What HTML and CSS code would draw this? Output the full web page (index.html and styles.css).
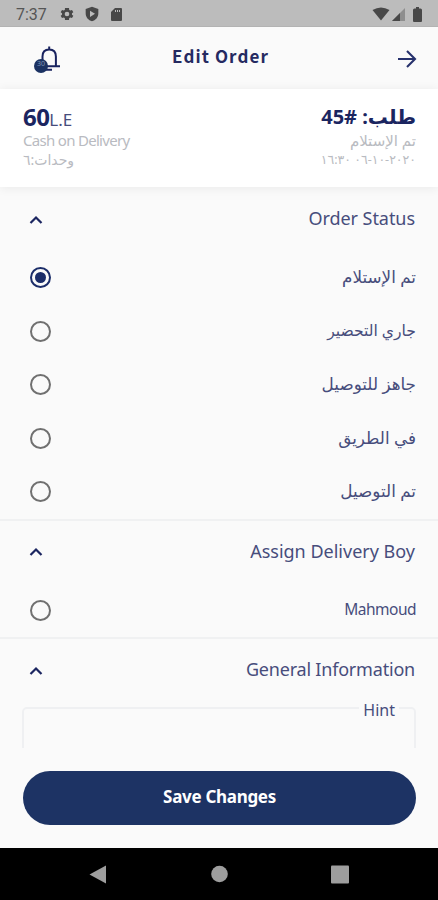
FILE: index.html
```html
<!DOCTYPE html>
<html lang="en">
<head>
    <meta charset="UTF-8">
    <title>Edit Order</title>
    <link rel="stylesheet" href="styles.css">
</head>
<body>
    <div class="statusbar">
        <span class="time">7:37</span>
        <svg class="gear" width="16" height="16" viewBox="0 0 24 24"><path fill-rule="evenodd" d="M19.4 13c.1-.7.1-1.300 0-2l2.100-1.600-2-3.500-2.500 1a7 7 0 0 0-1.700-1L15 3H9l-.3 2.900a7 7 0 0 0-1.700 1l-2.500-1-2 3.500L4.600 11a8 8 0 0 0 0 2l-2.100 1.600 2 3.500 2.500-1a7 7 0 0 0 1.700 1L9 21h6l.3-2.900a7 7 0 0 0 1.700-1l2.500 1 2-3.500zM12 15.500a3.500 3.500 0 1 1 0-7 3.500 3.500 0 0 1 0 7z"/></svg>
        <svg class="shield" width="16" height="16" viewBox="0 0 24 24"><path fill-rule="evenodd" d="M12 1 2.500 4.500V11c0 6 4 10.500 9.500 12 5.500-1.500 9.500-6 9.500-12V4.500zM9 7l7.500 4.700L9 16.500z"/></svg>
        <svg class="sd" width="13" height="14" viewBox="0 0 13 14"><path fill-rule="evenodd" d="M5 1h6a1 1 0 0 1 1 1v11a1 1 0 0 1-1 1H2a1 1 0 0 1-1-1V5zM5 3v2h1V3zm2 0v2h1V3zm2 0v2h1V3z"/></svg>
        <div class="signals">
            <svg width="18" height="14" viewBox="0 0 18 14"><path d="M9 13.500.500 3Q9-2 17.500 3z"/></svg>
            <svg width="13" height="13" viewBox="0 0 13 13"><path d="M13 0v13H0z" fill="#8e8e8e"/><path d="M8 5v8H0z"/></svg>
            <svg class="battery" width="9" height="15" viewBox="0 0 9 15"><path d="M3 0h3v1.500h1.500q1.500 0 1.500 1.500V14q0 1-1 1H1q-1 0-1-1V3q0-1.500 1.500-1.500H3z"/></svg>
        </div>
    </div>

    <div class="header">
        <svg class="bell" width="28" height="30" viewBox="0 0 28 30">
            <path d="M9.500 21V11.500q0-7 6.700-7t6.700 7V21M7 21.200h20M16.200 4.500V1.500M13 24.800h6" fill="none" stroke="#19235f" stroke-width="2"/>
            <circle cx="8" cy="21" r="7" fill="#1b3262"/>
            <text x="8" y="21" class="count">30</text>
        </svg>
        <h1>Edit Order</h1>
        <svg class="back" width="20" height="20" viewBox="0 0 20 20"><path d="M1 10h17M10 2l8 8-8 8" fill="none" stroke="#26316c" stroke-width="2.100"/></svg>
    </div>

    <div class="summary">
        <div class="payment">
            <p class="price"><b>60</b>L.E</p>
            <p class="method">Cash on Delivery</p>
            <p class="units"><bdo dir="ltr">٦:</bdo><span>وحدات</span></p>
        </div>
        <div class="order">
            <p class="number" dir="rtl">طلب: <bdo dir="ltr">45#</bdo></p>
            <p class="state" dir="rtl">تم الإستلام</p>
            <p class="date"><bdo dir="ltr">١٦:٣٠ ٠٦-١٠-٢٠٢٠</bdo></p>
        </div>
    </div>

    <div class="content">
        <div class="section">
            <div class="title">
                <svg width="14" height="10" viewBox="0 0 14 10"><path d="M1.500 8 7 2.500 12.500 8"/></svg>
                <h2 class="t-status">Order Status</h2>
            </div>
            <div class="option"><span class="radio checked"></span><span class="wide" dir="rtl">تم الإستلام</span></div>
            <div class="option"><span class="radio"></span><span class="narrow" dir="rtl">جاري التحضير</span></div>
            <div class="option"><span class="radio"></span><span class="wide" dir="rtl">جاهز للتوصيل</span></div>
            <div class="option"><span class="radio"></span><span class="wide" dir="rtl">في الطريق</span></div>
            <div class="option"><span class="radio"></span><span class="wide" dir="rtl">تم التوصيل</span></div>
        </div>
        <div class="section">
            <div class="title">
                <svg width="14" height="10" viewBox="0 0 14 10"><path d="M1.500 8 7 2.500 12.500 8"/></svg>
                <h2 class="t-assign">Assign Delivery Boy</h2>
            </div>
            <div class="option"><span class="radio"></span><span class="name">Mahmoud</span></div>
        </div>
        <div class="section">
            <div class="title">
                <svg width="14" height="10" viewBox="0 0 14 10"><path d="M1.500 8 7 2.500 12.500 8"/></svg>
                <h2 class="t-general">General Information</h2>
            </div>
            <div class="field"><label>Hint</label></div>
        </div>
    </div>

    <div class="footer">
        <button class="save">Save Changes</button>
    </div>

    <div class="navbar">
        <svg width="438" height="52" viewBox="0 0 438 52"><path d="M106 17.500v18L89.500 26.500z"/><circle cx="219.500" cy="26" r="8.300"/><rect x="331" y="17.500" width="18" height="18" rx="1"/></svg>
    </div>
</body>
</html>
```
FILE: styles.css
```css
*{
    margin: 0;
    padding: 0;
    box-sizing: border-box;
}

body{
    width: 438px;
    height: 900px;
    display: flex;
    flex-direction: column;
    overflow: hidden;
    background-color: #fafafa;
    color: #474d7c;
    font-family: "Noto Sans", "DejaVu Sans", sans-serif;
}

svg{
    display: block;
    flex: none;
}

p, h1, h2, .option span, button{
    white-space: nowrap;
}

/*status bar*/
.statusbar{
    height: 27px;
    flex: none;
    display: flex;
    align-items: center;
    padding: 2px 16px 0 16px;
    background-color: #bcbcbc;
    fill: #484848;
    border-bottom: 1px solid #b3b3b3;
}

.time{
    width: 43px;
    font: 16px Roboto, sans-serif;
    color: #555;
}

.shield{
    margin-left: 9px;
}

.sd{
    margin-left: 10px;
}

.signals{
    display: flex;
    align-items: center;
    margin-left: auto;
}

.signals svg{
    margin-left: 2px;
}

.signals .battery{
    margin-left: 8px;
}

/*header*/
.header{
    height: 62px;
    flex: none;
    display: flex;
    align-items: center;
    justify-content: space-between;
    padding: 1px 21px 0 33px;
}

.bell{
    margin-top: 2px;
}

.bell .count{
    font: 7px "Noto Sans", sans-serif;
    fill: #8294b5;
    text-anchor: middle;
}

h1{
    font: bold 17px/24px "Noto Sans CJK SC", sans-serif;
    letter-spacing: 1.1px;
    color: #252a61;
    padding-bottom: 5px;
    margin-right: 17px;
}

/*order summary*/
.summary{
    height: 98px;
    flex: none;
    display: flex;
    justify-content: space-between;
    padding: 14px 22px 0 23px;
    background-color: #fff;
    box-shadow: 0 1px 10px rgba(0, 0, 0, 0.07);
}

.summary p{
    height: 19px;
    line-height: 19px;
    font-size: 15px;
    color: #b9bbc1;
}

.summary .price, .summary .number{
    height: 28px;
    line-height: 28px;
    color: #474d7c;
}

.summary .price{
    font-size: 17px;
}

.price b{
    font-size: 24px;
    font-weight: 700;
    letter-spacing: -0.6px;
    color: #1b2560;
}

.summary .method{
    letter-spacing: -0.7px;
}

.summary .units{
    font-size: 14px;
}

.order{
    text-align: right;
}

.summary .number{
    font-size: 20px;
    font-weight: bold;
    color: #1b2560;
}

.summary .date{
    font-size: 12.5px;
    letter-spacing: -0.8px;
}

/*sections*/
.content{
    height: 561px;
    flex: none;
    overflow: hidden;
}

.section{
    border-bottom: 2px solid #f0f1f2;
    padding-bottom: 1px;
}

.section:first-child{
    padding-top: 1px;
}

.section:last-child{
    border: none;
}

.title{
    height: 62px;
    display: flex;
    align-items: center;
    justify-content: space-between;
    padding: 1px 23px 0 29px;
}

.title path{
    fill: none;
    stroke: #1b2560;
    stroke-width: 2.2;
}

h2{
    font-size: 18px;
    font-weight: 400;
    line-height: 28px;
    padding-bottom: 3px;
}

.t-status{
    letter-spacing: -0.05px;
}

.t-general{
    letter-spacing: -0.2px;
}

.option{
    height: 53.5px;
    display: flex;
    align-items: center;
    justify-content: space-between;
    padding: 2px 22px 0 30px;
    font-size: 16px;
}

.option span:last-child{
    padding-bottom: 2px;
}

.option .wide{
    font-size: 16.8px;
}

.option .narrow{
    font-size: 15.6px;
}

.option .name{
    font-size: 15.5px;
    letter-spacing: -0.5px;
}

.radio{
    width: 21px;
    height: 21px;
    flex: none;
    border: 2px solid #707070;
    border-radius: 50%;
}

.radio.checked{
    border-color: #1b2d69;
    background-color: #1b2d69;
    background-clip: content-box;
    padding: 3px;
}

.field{
    height: 80px;
    margin: 6px 22px 0;
    padding-right: 15px;
    border: 2px solid #eff0f2;
    border-radius: 5px;
    text-align: right;
}

/*label sits on the border line*/
.field label{
    display: inline-block;
    position: relative;
    top: -11px;
    padding: 0 4px;
    background-color: #fafafa;
    font-size: 16px;
    line-height: 24px;
}

/*footer*/
.footer{
    height: 100px;
    flex: none;
    padding: 23px 22px 0 23px;
}

.save{
    display: block;
    width: 100%;
    height: 54px;
    border: none;
    border-radius: 27px;
    background-color: #1d3364;
    color: #fff;
    font: bold 17px "Noto Sans", sans-serif;
    letter-spacing: -0.3px;
    padding-bottom: 4px;
}

.navbar{
    height: 52px;
    flex: none;
    background-color: #000;
    fill: #9e9e9e;
}
```
